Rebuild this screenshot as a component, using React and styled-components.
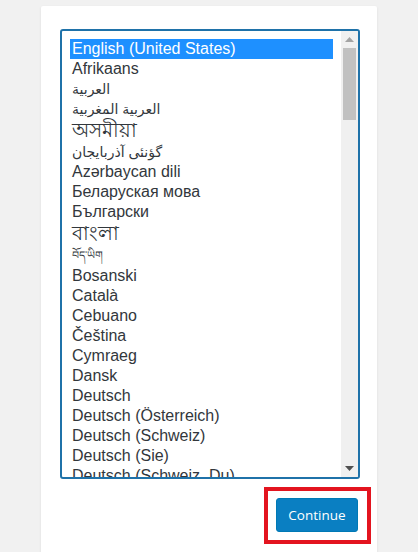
import React from 'react';
import styled, { createGlobalStyle } from 'styled-components';

const GlobalStyle = createGlobalStyle`
  html, body {
    margin: 0;
    padding: 0;
    background: #f1f1f1;
  }
  body {
    font-family: 'Liberation Sans', Arial, sans-serif;
  }
`;

// row heights follow the reference: latin rows are 20px, some scripts run taller
const LANGUAGES = [
  { label: 'English (United States)', selected: true },
  { label: 'Afrikaans' },
  { label: 'العربية', script: 'arabic' },
  { label: 'العربية المغربية', script: 'arabic' },
  { label: 'অসমীয়া', script: 'bengali', height: 23 },
  { label: 'گؤنئی آذربایجان', script: 'arabic' },
  { label: 'Azərbaycan dili' },
  { label: 'Беларуская мова' },
  { label: 'Български' },
  { label: 'বাংলা', script: 'bengali', height: 22 },
  { label: 'བོད་ཡིག', script: 'tibetan', height: 22 },
  { label: 'Bosanski' },
  { label: 'Català' },
  { label: 'Cebuano' },
  { label: 'Čeština' },
  { label: 'Cymraeg' },
  { label: 'Dansk' },
  { label: 'Deutsch' },
  { label: 'Deutsch (Österreich)' },
  { label: 'Deutsch (Schweiz)' },
  { label: 'Deutsch (Sie)' },
  { label: 'Deutsch (Schweiz, Du)' },
];

const SCRIPT_SIZE = {
  arabic: '14px',
  bengali: '20px',
  tibetan: '11px',
};

const App = () => (
  <>
    <GlobalStyle />
    <Page>
      <Card>
        <ListBox>
          <Options>
            {LANGUAGES.map((lang) => (
              <Option
                key={lang.label}
                $selected={lang.selected}
                $height={lang.height || 20}
                $size={SCRIPT_SIZE[lang.script] || '16px'}
              >
                {lang.label}
              </Option>
            ))}
          </Options>
          <ScrollTrack>
            <ScrollArrow>
              <svg width="9" height="5" viewBox="0 0 9 5">
                <path d="M0 5 L4.5 0 L9 5 Z" fill="#a3a3a3" />
              </svg>
            </ScrollArrow>
            <ScrollThumb />
            <ScrollSpacer />
            <ScrollArrow>
              <svg width="9" height="5" viewBox="0 0 9 5">
                <path d="M0 0 L9 0 L4.5 5 Z" fill="#505050" />
              </svg>
            </ScrollArrow>
          </ScrollTrack>
        </ListBox>
        <Footer>
          <Highlight>
            <PrimaryButton type="button">Continue</PrimaryButton>
          </Highlight>
        </Footer>
      </Card>
    </Page>
  </>
);

const Page = styled.div`
  width: 418px;
  height: 552px;
  padding-top: 6px;
  box-sizing: border-box;
  overflow: hidden;
`;

const Card = styled.div`
  margin-left: 41px;
  width: 336px;
  min-height: 560px;
  box-sizing: border-box;
  padding: 23px 17px 0 19px;
  background: #fff;
  box-shadow: 0 1px 3px rgba(0, 0, 0, 0.08);
  border-radius: 2px;
`;

const ListBox = styled.div`
  display: flex;
  height: 450px;
  box-sizing: border-box;
  border: 2px solid #1f72a9;
  border-radius: 3px;
  overflow: hidden;
  background: #fff;
`;

const Options = styled.div`
  flex: 1;
  padding: 8px 8px 0;
  overflow: hidden;
`;

const Option = styled.div`
  height: ${(p) => p.$height}px;
  line-height: ${(p) => p.$height}px;
  padding: 0 2px;
  font-family: 'Liberation Sans', 'DejaVu Sans', 'Noto Sans', sans-serif;
  font-size: ${(p) => p.$size};
  white-space: nowrap;
  color: ${(p) => (p.$selected ? '#fff' : '#32373c')};
  background: ${(p) => (p.$selected ? '#1e90ff' : 'transparent')};
`;

const ScrollTrack = styled.div`
  width: 17px;
  display: flex;
  flex-direction: column;
  background: #f0f0f0;
`;

const ScrollArrow = styled.div`
  height: 17px;
  display: flex;
  align-items: center;
  justify-content: center;
`;

const ScrollThumb = styled.div`
  height: 72px;
  margin: 0 2px;
  background: #c1c1c1;
`;

const ScrollSpacer = styled.div`
  flex: 1;
`;

const Footer = styled.div`
  display: flex;
  justify-content: flex-end;
  padding: 19px 2px 0 0;
`;

const Highlight = styled.div`
  position: relative;

  &::after {
    content: '';
    position: absolute;
    left: -12px;
    right: -13px;
    top: -11px;
    bottom: -12px;
    border: 4px solid #e3141f;
    pointer-events: none;
  }
`;

const PrimaryButton = styled.button`
  display: block;
  width: 82px;
  height: 34px;
  padding: 0;
  border: 1px solid #0079b5;
  border-radius: 3px;
  background: #0a7fc2;
  color: #fff;
  font-family: 'Open Sans', 'Noto Sans', sans-serif;
  font-size: 13.5px;
  cursor: pointer;
`;

export default App;
